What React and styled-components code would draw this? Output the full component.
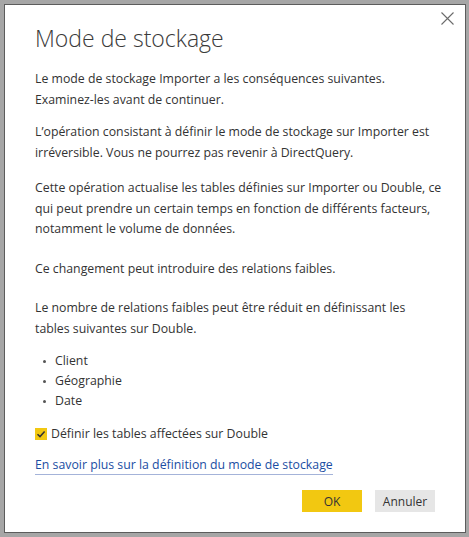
import React, { useState } from 'react'
import styled, { createGlobalStyle } from 'styled-components'

const GlobalStyle = createGlobalStyle`
  html, body {
    margin: 0;
    padding: 0;
    background: #a6a6a6;
  }
  body {
    font-family: "Open Sans", "Noto Sans", sans-serif;
  }
`

const Backdrop = styled.div`
  width: 469px;
  height: 537px;
  padding: 4px 3px 4px 4px;
  box-sizing: border-box;
`

const Dialog = styled.div`
  position: relative;
  height: 100%;
  box-sizing: border-box;
  background: #fff;
  border: 1px solid #5c5c5c;
  padding: 17px 30px 0 30px;
  color: #333;
`

const CloseButton = styled.button`
  position: absolute;
  top: 3px;
  right: 8px;
  width: 20px;
  height: 20px;
  padding: 0;
  border: none;
  background: transparent;
  display: flex;
  align-items: center;
  justify-content: center;
  cursor: pointer;
`

const Title = styled.h1`
  margin: 0 0 15px;
  font-size: 23px;
  font-weight: 300;
  line-height: 32px;
  color: #3a3a3a;
`

const Paragraph = styled.p`
  margin: 0 0 ${(p) => p.$gap ?? 11}px;
  font-size: 12.3px;
  line-height: 20.5px;
  white-space: nowrap;
`

const BulletList = styled.ul`
  margin: 0 0 13px;
  padding: 0 0 0 8px;
  list-style: none;
`

const BulletItem = styled.li`
  display: flex;
  align-items: center;
  gap: 9px;
  font-size: 12.3px;
  line-height: 20px;

  &::before {
    content: '';
    width: 3px;
    height: 3px;
    border-radius: 50%;
    background: #555;
  }
`

const CheckRow = styled.label`
  display: flex;
  align-items: center;
  gap: 4px;
  font-size: 12.3px;
  line-height: 20px;
  margin-bottom: 8px;
  cursor: pointer;
`

const CheckBox = styled.span`
  width: 12px;
  height: 12px;
  background: ${(p) => (p.$checked ? '#f2c811' : '#fff')};
  border: ${(p) => (p.$checked ? 'none' : '1px solid #666')};
  display: flex;
  align-items: center;
  justify-content: center;
`

const Link = styled.a`
  font-size: 12.3px;
  line-height: 20px;
  color: #1b4ea3;
  text-decoration: none;
  border-bottom: 1px solid #a4b3d9;
  padding-bottom: 1px;
`

const Footer = styled.div`
  display: flex;
  justify-content: flex-end;
  gap: 13px;
  margin-top: 15px;
`

const Button = styled.button`
  width: 60px;
  height: 22px;
  border: none;
  padding: 0;
  font-family: inherit;
  font-size: 12px;
  color: #333;
  background: ${(p) => (p.$primary ? '#f2c811' : '#e6e6e6')};
  cursor: pointer;
`

const App = () => {
  const [checked, setChecked] = useState(true)

  return (
    <>
      <GlobalStyle />
      <Backdrop>
        <Dialog>
          <CloseButton aria-label="Fermer">
            <svg width="13" height="13" viewBox="0 0 13 13">
              <path d="M0.5 0.5 L12.5 12.5 M12.5 0.5 L0.5 12.5" stroke="#6b6b6b" strokeWidth="1.1" fill="none" />
            </svg>
          </CloseButton>
          <Title>Mode de stockage</Title>
          <Paragraph $gap={12}>
            Le mode de stockage Importer a les conséquences suivantes.<br />
            Examinez-les avant de continuer.
          </Paragraph>
          <Paragraph $gap={15}>
            L’opération consistant à définir le mode de stockage sur Importer est<br />
            irréversible. Vous ne pourrez pas revenir à DirectQuery.
          </Paragraph>
          <Paragraph $gap={19}>
            Cette opération actualise les tables définies sur Importer ou Double, ce<br />
            qui peut prendre un certain temps en fonction de différents facteurs,<br />
            notamment le volume de données.
          </Paragraph>
          <Paragraph $gap={19}>Ce changement peut introduire des relations faibles.</Paragraph>
          <Paragraph $gap={12}>
            Le nombre de relations faibles peut être réduit en définissant les<br />
            tables suivantes sur Double.
          </Paragraph>
          <BulletList>
            <BulletItem>Client</BulletItem>
            <BulletItem>Géographie</BulletItem>
            <BulletItem>Date</BulletItem>
          </BulletList>
          <CheckRow onClick={() => setChecked(!checked)}>
            <CheckBox $checked={checked}>
              {checked && (
                <svg width="10" height="10" viewBox="0 0 10 10">
                  <path d="M1.5 5.2 L4 7.6 L8.6 2.4" stroke="#333" strokeWidth="1.5" fill="none" />
                </svg>
              )}
            </CheckBox>
            Définir les tables affectées sur Double
          </CheckRow>
          <Link href="#">En savoir plus sur la définition du mode de stockage</Link>
          <Footer>
            <Button $primary>OK</Button>
            <Button>Annuler</Button>
          </Footer>
        </Dialog>
      </Backdrop>
    </>
  )
}

export default App
